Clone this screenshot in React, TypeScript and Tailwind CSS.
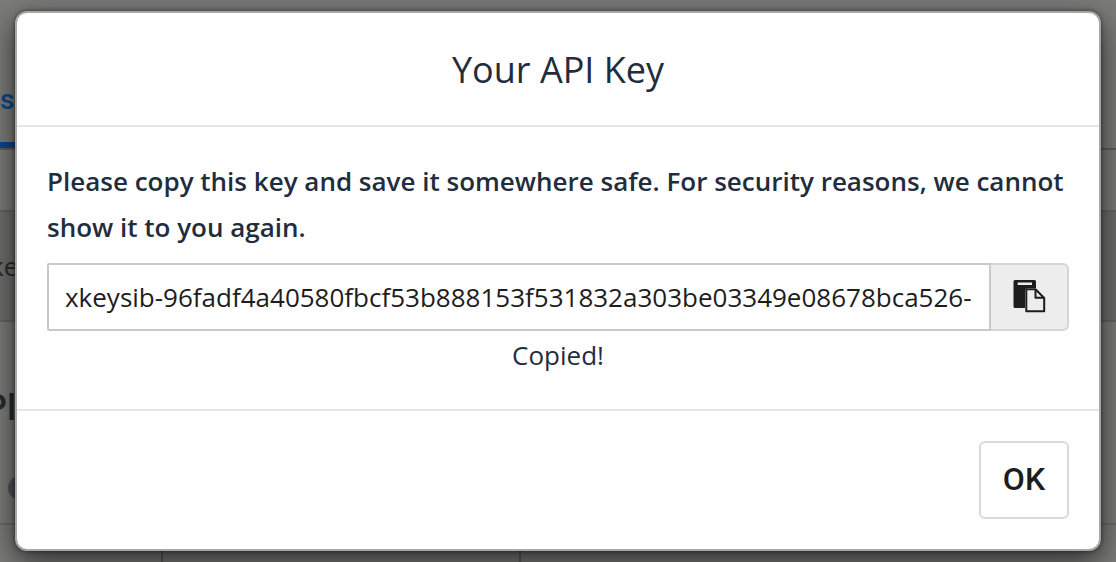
import { useState } from "react";

const API_KEY = "xkeysib-96fadf4a40580fbcf53b888153f531832a303be03349e08678bca526-";

function PasteIcon() {
  return (
    <svg viewBox="-1 0 34 34" className="h-[34px] w-[34px]" aria-hidden="true">
      <path
        fillRule="evenodd"
        fill="#1d1d1d"
        d="M2 0H21.500Q23 0 23 1.500V8H15Q12 8 12 11V28H2Q.500 28 .500 26.500V1.500Q.500 0 2 0ZM4.700 2.500V5H19V2.500Z"
      />
      <path
        d="M14 9.200H22.500L31.200 18V31.200H13.300V9.200Z"
        fill="#ededed"
        stroke="#1d1d1d"
        strokeWidth="2"
        strokeLinejoin="round"
      />
      <path d="M22.500 9.200V17.700H31" fill="none" stroke="#1d1d1d" strokeWidth="2" strokeLinejoin="round" />
    </svg>
  );
}

function PageBehind() {
  return (
    <div aria-hidden="true" className="flex h-full flex-col bg-[#7b7c7a] text-[#2b2b2b]">
      <div className="flex h-[150px] flex-col justify-end border-b-2 border-[#5c5d5c]">
        <div className="flex h-[62px] w-4 flex-col justify-between border-b-6 border-[#0a4689]">
          <span className="font-['Roboto',sans-serif] text-[28px] leading-7 font-medium text-[#0a4689]">s</span>
        </div>
      </div>
      <div className="mt-[60px] flex h-28 items-center border-y-2 border-[#656664] bg-[#6e6f6d]">
        <span className="-ml-2.5 font-['Open_Sans',sans-serif] text-[26px]">ke</span>
      </div>
      <div className="flex flex-1 flex-col pt-[66px]">
        <span className="-ml-4 font-['Roboto',sans-serif] text-4xl leading-10 font-medium">Pl</span>
        <span className="mt-12 ml-2 h-6 w-6 rounded-full bg-[#4f5157]" />
        <div className="mt-[23px] flex flex-1 border-t-2 border-[#6b6c6a]">
          <div className="w-[163px] border-r-2 border-[#5a5b5a]" />
          <div className="w-[358px] border-r-2 border-[#5a5b5a]" />
        </div>
      </div>
    </div>
  );
}

export default function App() {
  const [copied, setCopied] = useState(true);
  const copy = () => {
    navigator.clipboard?.writeText(API_KEY).then(() => setCopied(true));
  };

  return (
    <main className="relative h-screen overflow-hidden">
      <PageBehind />
      <div className="absolute inset-0 px-[15px] pt-[11px]">
        <section
          role="dialog"
          aria-modal="true"
          aria-labelledby="dialog-title"
          className="rounded-xl border-2 border-[#a6a8a8] bg-white font-['Open_Sans',sans-serif] text-[#1f2d3d] shadow-[0_10px_30px_rgba(0,0,0,0.65),0_0_4px_rgba(0,0,0,0.5)]"
        >
          <header className="border-b-2 border-[#e5e5e5] pt-[33px] pb-[31px]">
            <h1 id="dialog-title" className="text-center text-4xl leading-12">
              Your API Key
            </h1>
          </header>
          <div className="px-[30px] pt-[31px] pb-8">
            <label htmlFor="api-key" className="block text-[26px] leading-[46px] font-semibold">
              Please copy this key and save it somewhere safe. For security reasons, we cannot show it to you again.
            </label>
            <div className="mt-[13px] flex h-[68px]">
              <input
                id="api-key"
                readOnly
                value={API_KEY}
                className="min-w-0 flex-1 rounded-l-xs border-2 border-[#c9c9c9] bg-white px-4 text-[26px] text-[#1d1d1d] outline-none"
              />
              <button
                type="button"
                aria-label="Copy key"
                onClick={copy}
                className="flex w-[78px] items-center justify-center rounded-r-md border-2 border-l-0 border-[#d6d6d6] bg-[#ededed]"
              >
                <PasteIcon />
              </button>
            </div>
            <p role="status" className="h-[46px] text-center text-[26px] leading-12">
              {copied ? "Copied!" : ""}
            </p>
          </div>
          <footer className="flex justify-end border-t-2 border-[#e5e5e5] px-[30px] py-[30px]">
            <button
              type="button"
              className="h-[78px] w-[90px] rounded-md border-2 border-[#d9d9d9] bg-white pb-0.5 font-['Roboto',sans-serif] text-[32px] font-medium text-[#1d1d1d]"
            >
              OK
            </button>
          </footer>
        </section>
      </div>
    </main>
  );
}
